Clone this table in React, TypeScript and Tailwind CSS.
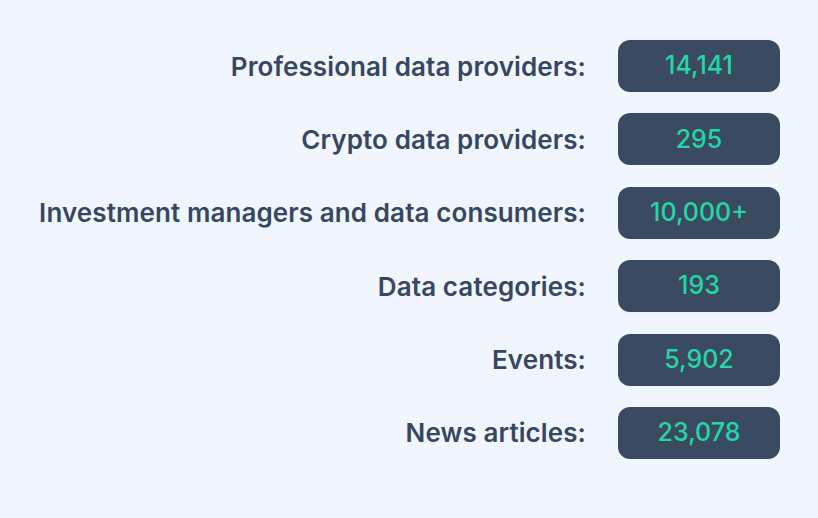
export default function App() {
  const rows: [string, string][] = [
    ["Professional data providers:", "14,141"],
    ["Crypto data providers:", "295"],
    ["Investment managers and data consumers:", "10,000+"],
    ["Data categories:", "193"],
    ["Events:", "5,902"],
    ["News articles:", "23,078"],
  ];
  return (
    <div className="w-[818px] h-[518px] bg-[#f1f5fe] pt-[40px] pl-[38px] font-['Inter',sans-serif]">
      <div className="grid grid-cols-[548px_162px] gap-x-[32px] gap-y-[21.4px]">
        {rows.map(([label, value]) => (
          <div key={label} className="contents">
            <div className="h-[52px] flex items-center justify-end text-[26px] font-semibold text-[#374760] whitespace-nowrap tracking-[0.1px]">
              {label}
            </div>
            <div className="h-[52px] rounded-[12px] bg-[#3a4a61] flex items-center justify-center text-[25px] font-medium text-[#24d6a8]">
              {value}
            </div>
          </div>
        ))}
      </div>
    </div>
  );
}
